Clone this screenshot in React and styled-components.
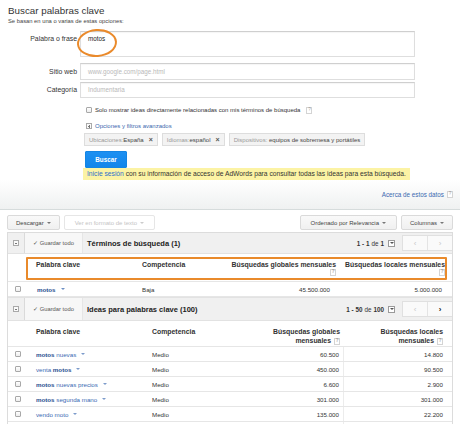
import React from "react";
import styled, { createGlobalStyle } from "styled-components";

const GlobalStyle = createGlobalStyle`
  html, body {
    margin: 0;
    padding: 0;
    background: #fff;
  }
  body {
    font-family: "Liberation Sans", Arial, Helvetica, sans-serif;
    color: #333;
    width: 460px;
    height: 424px;
    overflow: hidden;
  }
`;

const Page = styled.div`
  width: 460px;
`;

/* ---------- search form ---------- */

const SearchForm = styled.section`
  padding: 5px 0 0 8px;
`;

const Title = styled.h1`
  margin: 0;
  font-size: 9.8px;
  font-weight: normal;
  line-height: 11px;
  color: #333;
`;

const Subtitle = styled.p`
  margin: 1px 0 0;
  font-size: 5.8px;
  line-height: 8px;
  color: #444;
`;

const FieldRow = styled.div`
  display: flex;
  align-items: flex-start;
  margin-top: ${(p) => p.$gap}px;
`;

const FieldLabel = styled.label`
  width: 69px;
  margin-right: 3px;
  padding-top: ${(p) => p.$pt}px;
  text-align: right;
  font-size: 6.9px;
  line-height: 8px;
  color: #333;
`;

const InputBox = styled.div`
  position: relative;
  box-sizing: border-box;
  width: 335px;
  height: ${(p) => p.$h}px;
  padding: ${(p) => (p.$tall ? "3px 7px" : "0 7px")};
  line-height: ${(p) => (p.$tall ? "8px" : `${p.$h - 2}px`)};
  border: 1px solid #dedede;
  border-top-color: #cfcfcf;
  box-shadow: inset 0 1px 1px rgba(0, 0, 0, 0.04);
  font-size: 6.3px;
  color: ${(p) => (p.$placeholder ? "#b9b9b9" : "#222")};
  background: #fff;
`;

const CircleMark = styled.span`
  position: absolute;
  left: -4px;
  top: -3px;
  width: 40px;
  height: 28px;
  box-sizing: border-box;
  border: 2.5px solid #ea8a2b;
  border-radius: 50%;
  transform: rotate(-4deg);
`;

const Options = styled.div`
  margin-left: 76px;
  display: flex;
  flex-direction: column;
  align-items: flex-start;
`;

const CheckRow = styled.div`
  display: flex;
  align-items: center;
  gap: 3px;
  height: 10px;
  margin: 7px 0 0 2px;
  font-size: 6px;
  color: #333;
`;

const Check = styled.span`
  display: inline-block;
  box-sizing: border-box;
  width: 6px;
  height: 6px;
  border: 1px solid #a8a8a8;
  border-radius: 1px;
  background: linear-gradient(#fff, #ededed);
`;

const Help = styled.span`
  display: inline-flex;
  align-items: center;
  justify-content: center;
  box-sizing: border-box;
  width: 6px;
  height: 7px;
  margin-left: ${(p) => p.$ml || 3}px;
  border: 1px solid #d4d4d4;
  font-size: 4.5px;
  line-height: 1;
  color: #9a9a9a;
  background: #fff;
  vertical-align: middle;
`;

const LinkRow = styled.div`
  display: flex;
  align-items: center;
  gap: 3px;
  height: 10px;
  margin: 6px 0 0 2px;
  font-size: 6px;
  color: #3a68ae;
`;

const BoxIcon = styled.span`
  position: relative;
  display: inline-block;
  box-sizing: border-box;
  width: 6px;
  height: 6px;
  border: 1px solid #a9a9a9;
  background: #fafafa;
  &::before {
    content: "";
    position: absolute;
    left: 1px;
    right: 1px;
    top: 1.5px;
    height: 1px;
    background: #777;
  }
  &::after {
    content: "";
    display: ${(p) => (p.$plus ? "block" : "none")};
    position: absolute;
    top: 0.5px;
    bottom: 0.5px;
    left: 1.5px;
    width: 1px;
    background: #777;
  }
`;

const Chips = styled.div`
  display: flex;
  gap: 4px;
  margin-top: 2px;
`;

const Chip = styled.span`
  display: inline-flex;
  align-items: center;
  box-sizing: border-box;
  height: 13px;
  padding: 0 4px;
  border: 1px solid #dddddd;
  background: #f3f3f3;
  font-size: 6px;
  color: #999;
  white-space: nowrap;
  b {
    font-weight: normal;
    color: #444;
  }
`;

const ChipClose = styled.span`
  margin-left: 5px;
  font-size: 7px;
  font-weight: bold;
  color: #555;
`;

const SearchButton = styled.button`
  margin: 5px 0 0 1px;
  width: 42px;
  height: 17px;
  padding: 0;
  border: 1px solid #1485e4;
  border-radius: 1px;
  background: linear-gradient(#1d90f2, #1286ea);
  color: #fff;
  font-family: inherit;
  font-size: 6.3px;
  font-weight: bold;
`;

const Notice = styled.div`
  margin-left: -1px;
  height: 12px;
  padding: 0 4px;
  line-height: 12px;
  background: #fcf3a4;
  font-size: 6.7px;
  color: #333;
  white-space: nowrap;
  a {
    color: #2f6fcb;
    text-decoration: none;
  }
`;

/* ---------- info band + toolbar ---------- */

const InfoBand = styled.div`
  display: flex;
  justify-content: flex-end;
  align-items: center;
  height: 29px;
  padding-right: 7px;
  border-bottom: 1px solid #d6dcdc;
  background: linear-gradient(#ffffff, #eff1f1);
  font-size: 6.3px;
  color: #3b69b0;
`;

const Toolbar = styled.div`
  display: flex;
  align-items: center;
  gap: 4px;
  margin: 5px 7px 0 7px;
`;

const ToolButton = styled.span`
  display: inline-flex;
  align-items: center;
  gap: 3px;
  box-sizing: border-box;
  height: 15px;
  padding: 0 ${(p) => p.$px || 8}px;
  margin-left: ${(p) => (p.$push ? "auto" : "0")};
  border: 1px solid ${(p) => (p.$disabled ? "#e6e6e6" : "#dadada")};
  border-radius: 2px;
  background: ${(p) =>
    p.$disabled ? "#fff" : "linear-gradient(#f9f9f9, #f0f0f0)"};
  font-size: 6px;
  color: ${(p) => (p.$disabled ? "#c4c4c4" : "#444")};
  white-space: nowrap;
`;

const Caret = styled.span`
  display: inline-block;
  width: 0;
  height: 0;
  margin-left: ${(p) => p.$ml || 0}px;
  border-left: 2px solid transparent;
  border-right: 2px solid transparent;
  border-top: 2.5px solid ${(p) => p.$color || "#777"};
  vertical-align: middle;
`;

/* ---------- results panel ---------- */

const Panel = styled.div`
  margin: 2px 7px 0 7px;
  border: 1px solid #dcdcdc;
  border-bottom: none;
`;

const SectionHeader = styled.div`
  display: flex;
  align-items: stretch;
  height: ${(p) => p.$h}px;
  background: #f0f0f0;
  border-bottom: 1px solid #e2e2e2;
  border-top: ${(p) => (p.$first ? "none" : "1px solid #e2e2e2")};
`;

const CollapseCell = styled.div`
  display: flex;
  align-items: center;
  justify-content: center;
  width: 16px;
  border-right: 1px solid #dadada;
`;

const SaveAll = styled.div`
  display: flex;
  align-items: center;
  justify-content: center;
  width: 57px;
  background: #f7f7f7;
  border-right: 1px solid #e6e6e6;
  font-size: 5.8px;
  color: #555;
  white-space: nowrap;
`;

const SectionTitle = styled.div`
  display: flex;
  align-items: center;
  margin-left: 4px;
  font-size: 7.5px;
  font-weight: bold;
  color: #222;
`;

const Range = styled.div`
  display: flex;
  align-items: center;
  gap: 2px;
  margin-left: auto;
  font-size: 6.3px;
  color: #333;
  b {
    font-weight: bold;
  }
`;

const MiniSelect = styled.span`
  display: inline-flex;
  align-items: center;
  justify-content: center;
  box-sizing: border-box;
  width: 7px;
  height: 7px;
  margin-left: 2px;
  border: 1px solid #9a9a9a;
  background: #fff;
`;

const Pager = styled.div`
  display: flex;
  align-self: center;
  height: 14px;
  margin-left: 7px;
  border: 1px solid #e0e0e0;
  border-right: none;
  background: #fafafa;
`;

const PageButton = styled.span`
  display: flex;
  align-items: center;
  justify-content: center;
  width: 24px;
  border-left: ${(p) => (p.$split ? "1px solid #e4e4e4" : "none")};
  font-size: 8px;
  font-weight: ${(p) => (p.$active ? "bold" : "normal")};
  color: ${(p) => (p.$active ? "#222" : "#c8c8c8")};
`;

const Row = styled.div`
  position: relative;
  display: grid;
  grid-template-columns: ${(p) => p.$cols};
  height: ${(p) => p.$h}px;
  border-bottom: 1px solid #e6e6e6;
  box-sizing: border-box;
  font-size: 6.2px;
  color: #333;
`;

const Cell = styled.div`
  display: flex;
  align-items: ${(p) => (p.$top ? "flex-start" : "center")};
  justify-content: ${(p) => (p.$right ? "flex-end" : p.$center ? "center" : "flex-start")};
  padding: ${(p) => p.$pad || "0"};
  border-left: ${(p) => (p.$line ? "1px solid #ececec" : "none")};
  white-space: nowrap;
`;

const HeadText = styled.div`
  display: flex;
  flex-direction: column;
  align-items: ${(p) => (p.$right ? "flex-end" : "flex-start")};
  text-align: ${(p) => (p.$right ? "right" : "left")};
  font-size: 6.9px;
  font-weight: bold;
  line-height: ${(p) => p.$lh || 8}px;
  color: #333;
`;

const Keyword = styled.span`
  display: inline-flex;
  align-items: center;
  gap: 2px;
  color: #3a69b2;
  b {
    color: #1f4c8e;
  }
`;

const Outline = styled.span`
  position: absolute;
  left: 18px;
  top: 3px;
  width: 421px;
  height: 23px;
  box-sizing: border-box;
  border: 2px solid #e98a2b;
  border-radius: 1px;
  pointer-events: none;
`;

const termCols = "20px 110px 89px 114px 1fr";
const ideaCols = "20px 120px 100px 95px 1fr";

const ideas = [
  { bold: "motos", rest: " nuevas", comp: "Medio", global: "60.500", local: "14.800" },
  { pre: "venta ", bold: "motos", comp: "Medio", global: "450.000", local: "90.500" },
  { bold: "motos", rest: " nuevas precios", comp: "Medio", global: "6.600", local: "2.900" },
  { bold: "motos", rest: " segunda mano", comp: "Medio", global: "301.000", local: "301.000" },
  { pre: "vendo moto", comp: "Medio", global: "135.000", local: "22.200" },
];

const SectionBar = ({ h, first, title, from, to, total, canNext }) => (
  <SectionHeader $h={h} $first={first}>
    <CollapseCell>
      <BoxIcon />
    </CollapseCell>
    <SaveAll>✓ Guardar todo</SaveAll>
    <SectionTitle>{title}</SectionTitle>
    <Range>
      <b>
        {from} - {to}
      </b>
      <span>de</span>
      <b>{total}</b>
      <MiniSelect>
        <Caret $color="#555" />
      </MiniSelect>
    </Range>
    <Pager>
      <PageButton>‹</PageButton>
      <PageButton $split $active={canNext}>
        ›
      </PageButton>
    </Pager>
  </SectionHeader>
);

export default function App() {
  return (
    <Page>
      <GlobalStyle />
      <SearchForm>
        <Title>Buscar palabras clave</Title>
        <Subtitle>Se basan en una o varias de estas opciones:</Subtitle>

        <FieldRow $gap={6}>
          <FieldLabel $pt={3.5}>Palabra o frase</FieldLabel>
          <InputBox $h={26} $tall>
            motos
            <CircleMark />
          </InputBox>
        </FieldRow>
        <FieldRow $gap={6}>
          <FieldLabel $pt={4.5}>Sitio web</FieldLabel>
          <InputBox $h={17} $placeholder>
            www.google.com/page.html
          </InputBox>
        </FieldRow>
        <FieldRow $gap={2}>
          <FieldLabel $pt={4}>Categoría</FieldLabel>
          <InputBox $h={16} $placeholder>
            Indumentaria
          </InputBox>
        </FieldRow>

        <Options>
          <CheckRow>
            <Check />
            <span>
              Solo mostrar ideas directamente relacionadas con mis términos de
              búsqueda
            </span>
            <Help>?</Help>
          </CheckRow>
          <LinkRow>
            <BoxIcon $plus />
            <span>Opciones y filtros avanzados</span>
          </LinkRow>
          <Chips>
            <Chip>
              Ubicaciones:<b>España</b>
              <ChipClose>×</ChipClose>
            </Chip>
            <Chip>
              Idiomas:<b>español</b>
              <ChipClose>×</ChipClose>
            </Chip>
            <Chip>
              Dispositivos:&nbsp;<b>equipos de sobremesa y portátiles</b>
            </Chip>
          </Chips>
          <SearchButton>Buscar</SearchButton>
          <Notice>
            <a href="#">Inicie sesión</a> con su información de acceso de
            AdWords para consultar todas las ideas para esta búsqueda.
          </Notice>
        </Options>
      </SearchForm>

      <InfoBand>
        <span>Acerca de estos datos</span>
        <Help $ml={3}>?</Help>
      </InfoBand>

      <Toolbar>
        <ToolButton>
          Descargar <Caret />
        </ToolButton>
        <ToolButton $disabled $px={10}>
          Ver en formato de texto <Caret $color="#ccc" />
        </ToolButton>
        <ToolButton $push $px={10}>
          Ordenado por Relevancia <Caret />
        </ToolButton>
        <ToolButton $px={8}>
          Columnas <Caret />
        </ToolButton>
      </Toolbar>

      <Panel>
        <SectionBar
          h={20}
          first
          title="Términos de búsqueda (1)"
          from="1"
          to="1"
          total="1"
        />
        <Row $cols={termCols} $h={28}>
          <Cell />
          <Cell $top $pad="7px 0 0 8px">
            <HeadText>Palabra clave</HeadText>
          </Cell>
          <Cell $top $pad="7px 0 0 4px">
            <HeadText>Competencia</HeadText>
          </Cell>
          <Cell $top $right $pad="7px 5px 0 0">
            <HeadText $right>
              <span>Búsquedas globales mensuales</span>
              <Help>?</Help>
            </HeadText>
          </Cell>
          <Cell $top $right $pad="7px 7px 0 0">
            <HeadText $right>
              <span>Búsquedas locales mensuales</span>
              <Help>?</Help>
            </HeadText>
          </Cell>
          <Outline />
        </Row>
        <Row $cols={termCols} $h={15}>
          <Cell $center>
            <Check />
          </Cell>
          <Cell $pad="0 0 0 9px">
            <Keyword>
              <b>motos</b>
              <Caret $ml={3} $color="#6d8fc4" />
            </Keyword>
          </Cell>
          <Cell $pad="0 0 0 4px">Baja</Cell>
          <Cell $right $pad="0 11px 0 0">
            45.500.000
          </Cell>
          <Cell $right $pad="0 10px 0 0">
            5.000.000
          </Cell>
        </Row>

        <SectionBar
          h={22}
          title="Ideas para palabras clave (100)"
          from="1"
          to="50"
          total="100"
          canNext
        />
        <Row $cols={ideaCols} $h={26}>
          <Cell />
          <Cell $top $pad="6px 0 0 8px">
            <HeadText $lh={9}>Palabra clave</HeadText>
          </Cell>
          <Cell $top $pad="6px 0 0 4px">
            <HeadText $lh={9}>Competencia</HeadText>
          </Cell>
          <Cell $top $right $pad="6px 3px 0 0">
            <HeadText $right $lh={9}>
              <span>Búsquedas globales</span>
              <span>
                mensuales<Help>?</Help>
              </span>
            </HeadText>
          </Cell>
          <Cell $top $right $pad="6px 9px 0 0">
            <HeadText $right $lh={9}>
              <span>Búsquedas locales</span>
              <span>
                mensuales<Help>?</Help>
              </span>
            </HeadText>
          </Cell>
        </Row>
        {ideas.map((r, i) => (
          <Row key={i} $cols={ideaCols} $h={15}>
            <Cell $center>
              <Check />
            </Cell>
            <Cell $pad="0 0 0 8px">
              <Keyword>
                <span>
                  {r.pre}
                  {r.bold && <b>{r.bold}</b>}
                  {r.rest}
                </span>
                <Caret $ml={3} $color="#7d9bcb" />
              </Keyword>
            </Cell>
            <Cell $pad="0 0 0 4px">{r.comp}</Cell>
            <Cell $right $pad="0 4px 0 0">
              {r.global}
            </Cell>
            <Cell $right $line $pad="0 9px 0 0">
              {r.local}
            </Cell>
          </Row>
        ))}
        <Row $cols={ideaCols} $h={15}>
          <Cell />
          <Cell />
          <Cell />
          <Cell />
          <Cell $line />
        </Row>
      </Panel>
    </Page>
  );
}
